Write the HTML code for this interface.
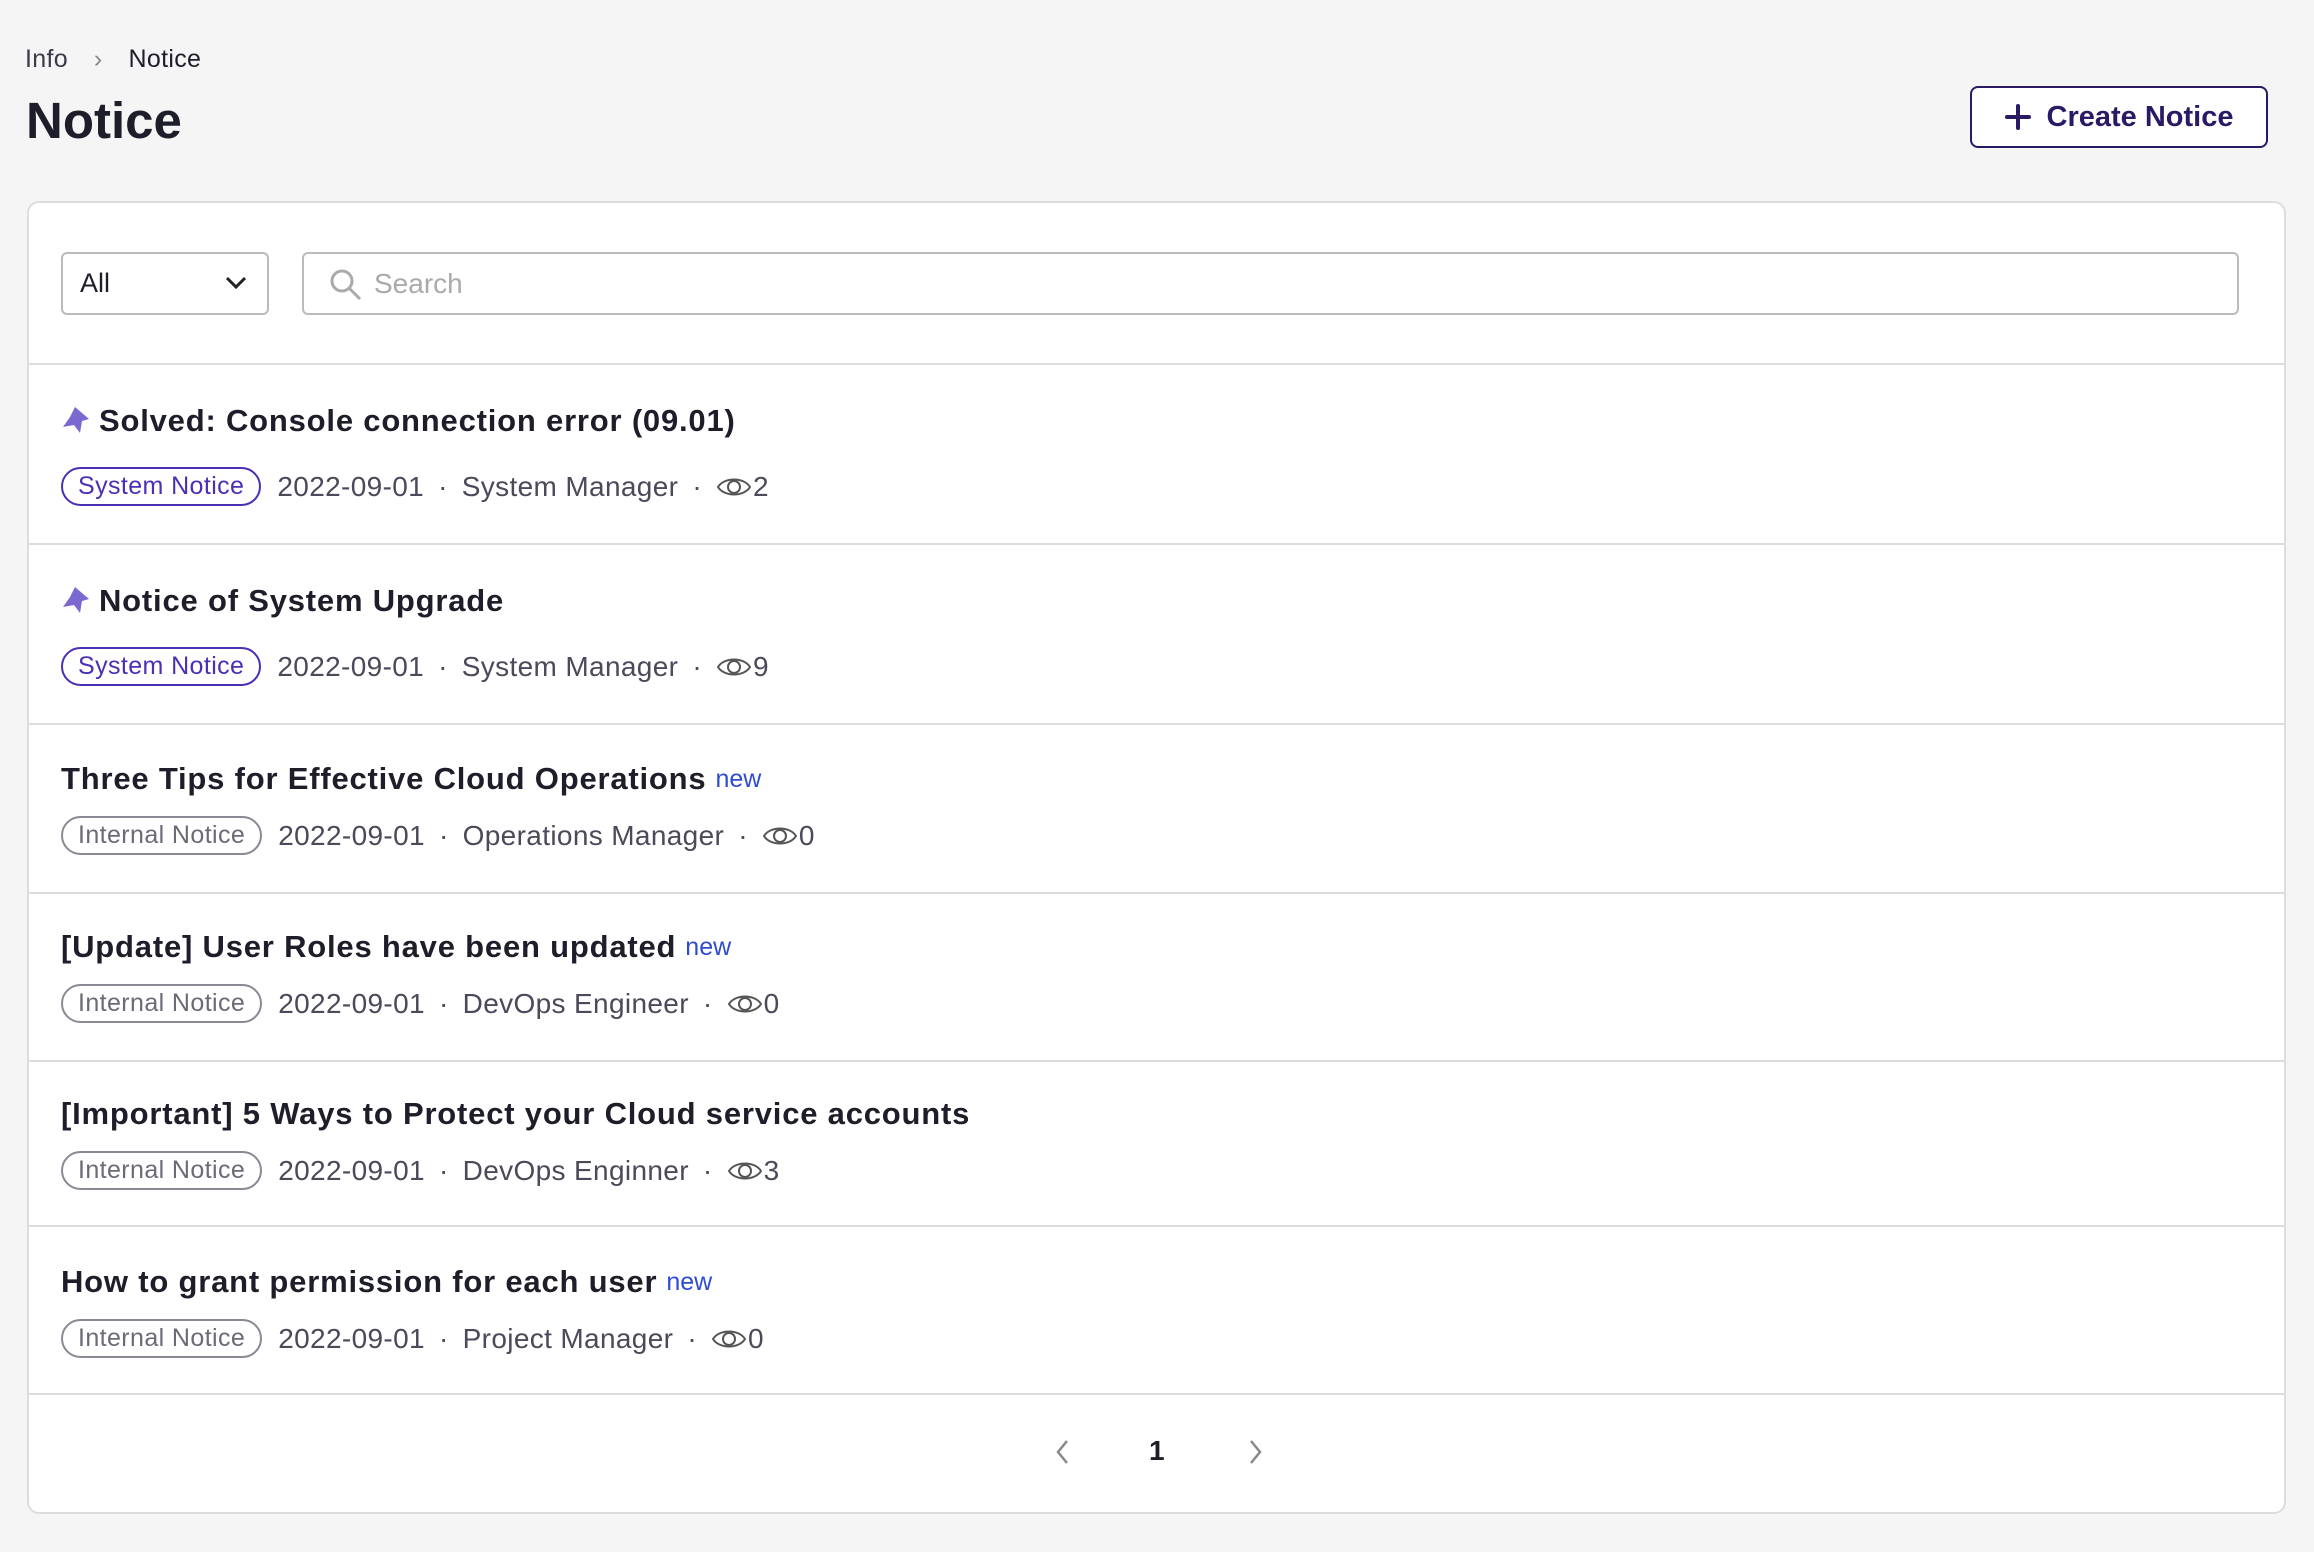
<!DOCTYPE html>
<html><head><meta charset="utf-8"><style>
*{box-sizing:border-box;margin:0;padding:0}
body{width:2314px;height:1552px;background:#f5f5f5;font-family:"Liberation Sans",sans-serif;color:#1e1e2a;position:relative;overflow:hidden}
.bc{position:absolute;left:25px;top:45px;font-size:25px;color:#3a3a48;letter-spacing:0.3px}
.bc .s{color:#888;margin:0 26px}
.bc b{font-weight:normal;color:#1e1e2a}
h1{position:absolute;left:26px;top:91px;font-size:51px;font-weight:bold;color:#1e1e2a}
.btn{position:absolute;left:1970px;top:86px;width:298px;height:62px;border:2.5px solid #2a1a66;border-radius:8px;background:#fff;color:#2a1a66;font-weight:bold;font-size:29px;display:flex;align-items:center;justify-content:center;gap:16px}
.card{position:absolute;left:27px;top:201px;width:2259px;height:1313px;background:#fff;border:2px solid #ddd;border-radius:12px;overflow:hidden}
.sel{position:absolute;left:32px;top:49px;width:208px;height:63px;border:2px solid #bbb;border-radius:6px;font-size:27px;padding:14px 0 0 17px}
.sel svg{position:absolute;right:20px;top:22px}
.search{position:absolute;left:273px;top:49px;width:1937px;height:63px;border:2.5px solid #bbb;border-radius:6px;font-size:28px;color:#aaa;padding:14px 0 0 70px}
.search svg{position:absolute;left:24px;top:13px}
.hr{position:absolute;left:0;right:0;height:2px;background:#ddd}
.row{position:absolute;left:32px}
.t{font-size:31px;font-weight:bold;color:#1e1e2a;white-space:nowrap;display:flex;align-items:center;letter-spacing:0.8px}
.t .n{font-size:25px;font-weight:normal;color:#2f4bd1;margin-left:9px;letter-spacing:0}
.m{position:absolute;left:0;font-size:28px;color:#4a4a5a;white-space:nowrap;display:flex;align-items:center;letter-spacing:0.35px}
.tag{border:2px solid #8a8a95;color:#6b6b78;border-radius:20px;font-size:25px;padding:3px 15px;margin-right:16px;letter-spacing:0.4px}
.tag.p{border-color:#4b2fb5;color:#4b2fb5}
.d{margin:0 14px}
.m svg{margin-right:1px}
.pg{position:absolute;top:1232px;font-size:28px}
</style></head><body>
<div class="bc">Info<span class="s">›</span><b>Notice</b></div>
<h1>Notice</h1>
<div class="btn"><svg width="26" height="26" viewBox="0 0 26 26"><path d="M13 2v22M2 13h22" stroke="#2a1a66" stroke-width="4" stroke-linecap="round"/></svg>Create Notice</div>
<div class="card">
<div class="sel">All<svg width="22" height="14" viewBox="0 0 22 14"><path d="M2 2l9 9 9-9" fill="none" stroke="#222" stroke-width="3"/></svg></div>
<div class="search"><svg width="36" height="36" viewBox="0 0 36 36"><circle cx="14" cy="14" r="10" fill="none" stroke="#aaa" stroke-width="3"/><path d="M21 21l11 11" stroke="#aaa" stroke-width="3"/></svg>Search</div>
<div class="hr" style="top:160px"></div>

<div class="row" style="top:200px"><div class="t"><svg width="32" height="32" viewBox="0 0 32 32" style="margin-right:6px"><path d="M14 2l14 12-7 2-2 12-6-8-11 2 7-10z" fill="#7b68d0"/></svg>Solved: Console connection error (09.01)</div>
<div class="m" style="top:64px"><span class="tag p">System Notice</span>2022-09-01<span class="d">·</span>System Manager<span class="d">·</span><svg width="36" height="28" viewBox="0 0 36 28"><path d="M2 14C8 4 28 4 34 14 28 24 8 24 2 14z" fill="none" stroke="#555" stroke-width="2"/><circle cx="18" cy="14" r="6" fill="none" stroke="#555" stroke-width="2"/></svg>2</div></div>
<div class="hr" style="top:340px"></div>

<div class="row" style="top:380px"><div class="t"><svg width="32" height="32" viewBox="0 0 32 32" style="margin-right:6px"><path d="M14 2l14 12-7 2-2 12-6-8-11 2 7-10z" fill="#7b68d0"/></svg>Notice of System Upgrade</div>
<div class="m" style="top:64px"><span class="tag p">System Notice</span>2022-09-01<span class="d">·</span>System Manager<span class="d">·</span><svg width="36" height="28" viewBox="0 0 36 28"><path d="M2 14C8 4 28 4 34 14 28 24 8 24 2 14z" fill="none" stroke="#555" stroke-width="2"/><circle cx="18" cy="14" r="6" fill="none" stroke="#555" stroke-width="2"/></svg>9</div></div>
<div class="hr" style="top:520px"></div>

<div class="row" style="top:558px"><div class="t">Three Tips for Effective Cloud Operations<span class="n">new</span></div>
<div class="m" style="top:55px"><span class="tag">Internal Notice</span>2022-09-01<span class="d">·</span>Operations Manager<span class="d">·</span><svg width="36" height="28" viewBox="0 0 36 28"><path d="M2 14C8 4 28 4 34 14 28 24 8 24 2 14z" fill="none" stroke="#555" stroke-width="2"/><circle cx="18" cy="14" r="6" fill="none" stroke="#555" stroke-width="2"/></svg>0</div></div>
<div class="hr" style="top:689px"></div>

<div class="row" style="top:726px"><div class="t">[Update] User Roles have been updated<span class="n">new</span></div>
<div class="m" style="top:55px"><span class="tag">Internal Notice</span>2022-09-01<span class="d">·</span>DevOps Engineer<span class="d">·</span><svg width="36" height="28" viewBox="0 0 36 28"><path d="M2 14C8 4 28 4 34 14 28 24 8 24 2 14z" fill="none" stroke="#555" stroke-width="2"/><circle cx="18" cy="14" r="6" fill="none" stroke="#555" stroke-width="2"/></svg>0</div></div>
<div class="hr" style="top:857px"></div>

<div class="row" style="top:893px"><div class="t">[Important] 5 Ways to Protect your Cloud service accounts</div>
<div class="m" style="top:55px"><span class="tag">Internal Notice</span>2022-09-01<span class="d">·</span>DevOps Enginner<span class="d">·</span><svg width="36" height="28" viewBox="0 0 36 28"><path d="M2 14C8 4 28 4 34 14 28 24 8 24 2 14z" fill="none" stroke="#555" stroke-width="2"/><circle cx="18" cy="14" r="6" fill="none" stroke="#555" stroke-width="2"/></svg>3</div></div>
<div class="hr" style="top:1022px"></div>

<div class="row" style="top:1061px"><div class="t">How to grant permission for each user<span class="n">new</span></div>
<div class="m" style="top:55px"><span class="tag">Internal Notice</span>2022-09-01<span class="d">·</span>Project Manager<span class="d">·</span><svg width="36" height="28" viewBox="0 0 36 28"><path d="M2 14C8 4 28 4 34 14 28 24 8 24 2 14z" fill="none" stroke="#555" stroke-width="2"/><circle cx="18" cy="14" r="6" fill="none" stroke="#555" stroke-width="2"/></svg>0</div></div>
<div class="hr" style="top:1190px"></div>

<svg class="pg" style="left:1026px;top:1236px" width="16" height="26" viewBox="0 0 16 26"><path d="M12 2L3 13l9 11" fill="none" stroke="#888" stroke-width="2.5"/></svg>
<div class="pg" style="left:1120px;top:1232px;font-weight:bold">1</div>
<svg class="pg" style="left:1218px;top:1236px" width="16" height="26" viewBox="0 0 16 26"><path d="M4 2l9 11-9 11" fill="none" stroke="#888" stroke-width="2.5"/></svg>
</div>
</body></html>
